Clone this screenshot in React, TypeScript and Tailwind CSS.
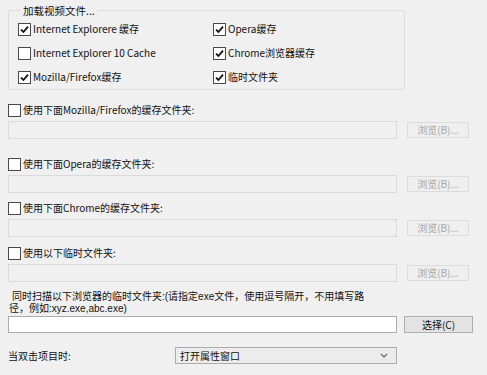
import React from "react";

function Box({ checked }: { checked?: boolean }) {
  return (
    <span className="w-[13px] h-[13px] border border-[#4a4a4a] bg-white flex items-center justify-center shrink-0">
      {checked && (
        <svg width="9" height="9" viewBox="0 0 9 9">
          <path d="M1 4.6 L3.4 7 L8 1.6" fill="none" stroke="#111" strokeWidth="1.8" />
        </svg>
      )}
    </span>
  );
}

function Check({ label, checked }: { label: string; checked?: boolean }) {
  return (
    <div className="flex items-center h-[24px] gap-[2px]">
      <Box checked={checked} />
      <span className="leading-[14px]">{label}</span>
    </div>
  );
}

function Section({ label, className }: { label: string; className: string }) {
  return (
    <div className={className}>
      <div className="flex items-center h-[16px] gap-[2px] ml-[8px]">
        <Box />
        <span className="leading-[14px]">{label}</span>
      </div>
      <div className="flex items-center mt-[3px] ml-[8px]">
        <div className="w-[389px] h-[18px] border border-[#dadada] bg-[#f0f0f0]" />
        <div className="ml-[10px] w-[62px] h-[16px] border border-[#dcdcdc] bg-[#efefef] text-[#a6a6a6] flex items-center justify-center text-[10px] leading-[12px]">
          浏览(B)...
        </div>
      </div>
    </div>
  );
}

export default function App() {
  return (
    <div
      className="w-[487px] h-[375px] bg-[#f0f0f0] overflow-hidden text-[10px] text-[#111]"
      style={{ fontFamily: '"Noto Sans CJK SC", "Liberation Sans", sans-serif' }}
    >
      <fieldset className="ml-[8px] mt-[4px] w-[397px] h-[86px] border border-[#dcdcdc] rounded-[2px] pl-[9px]">
        <legend className="ml-[3px] px-[2px] leading-[13px] text-[10.5px]">加载视频文件...</legend>
        <div className="grid grid-cols-[195px_1fr]">
          <Check label="Internet Explorere 缓存" checked />
          <Check label="Opera缓存" checked />
          <Check label="Internet Explorer 10 Cache" />
          <Check label="Chrome浏览器缓存" checked />
          <Check label="Mozilla/Firefox缓存" checked />
          <Check label="临时文件夹" checked />
        </div>
      </fieldset>
      <Section className="mt-[12px]" label="使用下面Mozilla/Firefox的缓存文件夹:" />
      <Section className="mt-[17px]" label="使用下面Opera的缓存文件夹:" />
      <Section className="mt-[7px]" label="使用下面Chrome的缓存文件夹:" />
      <Section className="mt-[8px]" label="使用以下临时文件夹:" />
      <div
        className="mt-[9px] ml-[9px] w-[390px] leading-[12px]"
        style={{ fontFamily: '"Liberation Sans", "Noto Sans CJK SC", sans-serif' }}
      >
        <div className="h-[12px] pl-[3px]">同时扫描以下浏览器的临时文件夹:(请指定exe文件，使用逗号隔开，不用填写路</div>
        <div className="h-[12px]">径，例如:xyz.exe,abc.exe)</div>
      </div>
      <div className="flex items-center mt-[1px] ml-[8px]">
        <div className="w-[389px] h-[17px] border border-[#acacac] bg-white" />
        <div className="ml-[7px] w-[69px] h-[17px] border border-[#adadad] bg-[#e3e3e3] flex items-center justify-center leading-[12px]">
          选择(C)
        </div>
      </div>
      <div className="flex items-center mt-[14px] ml-[8px] h-[17px]">
        <span className="w-[167px] leading-[14px]">当双击项目时:</span>
        <div className="w-[222px] h-[17px] border border-[#acacac] bg-[#ececec] flex items-center justify-between pl-[4px] pr-[8px]">
          <span className="leading-[14px]">打开属性窗口</span>
          <svg width="8" height="5" viewBox="0 0 8 5">
            <path d="M1 1 L4 4 L7 1" fill="none" stroke="#666" strokeWidth="1.2" />
          </svg>
        </div>
      </div>
    </div>
  );
}
